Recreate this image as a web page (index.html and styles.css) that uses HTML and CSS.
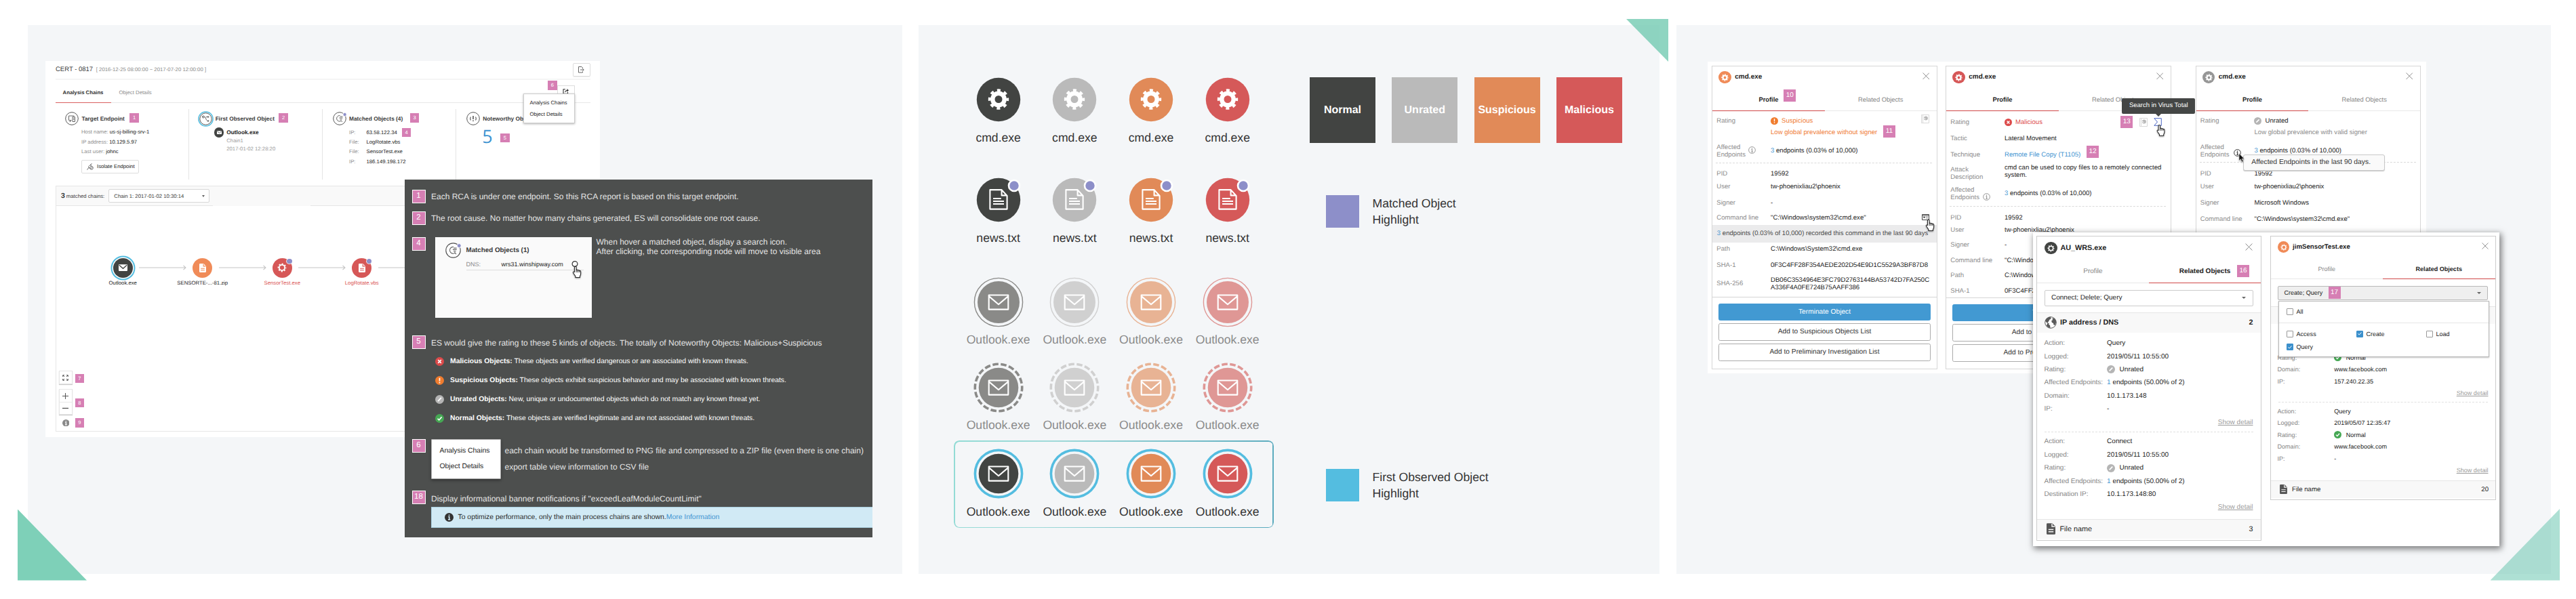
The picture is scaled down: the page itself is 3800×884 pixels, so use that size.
FILE: index.html
```html
<!DOCTYPE html>
<html lang="en">
<head>
<meta charset="utf-8">
<title>Root cause analysis – UI specification</title>
<link rel="stylesheet" href="styles.css">
</head>
<body>
<svg class="defs" aria-hidden="true">
  <symbol id="gear" viewBox="-16 -16 32 32"><circle r="8.7" fill="none" stroke="currentColor" stroke-width="6.4"/><circle r="13.2" fill="none" stroke="currentColor" stroke-width="4" stroke-dasharray="5 5.367" stroke-dashoffset="2.5"/></symbol>
  <symbol id="gear-thin" viewBox="-16 -16 32 32"><circle r="9.2" fill="none" stroke="currentColor" stroke-width="4"/><circle r="12.6" fill="none" stroke="currentColor" stroke-width="4" stroke-dasharray="5 4.896" stroke-dashoffset="2.5"/></symbol>
  <symbol id="doc" viewBox="-16 -16 32 32"><path d="M-11.6-14.9H4.6L12.6-6V13.6H-12.6V-14.9zM4.6-14.9V-6.6H12.6" fill="none" stroke="currentColor" stroke-width="2.1" stroke-linejoin="round"/><path d="M-8-2.1H3.8M-8 1.9H8M-8 5.9H8" stroke="currentColor" stroke-width="2"/></symbol>
  <symbol id="mail" viewBox="-16 -16 32 32"><path d="M-14.3-10.5H14.3V10.6H-14.3zM-14-8.6L0 3.2 14-8.6" fill="none" stroke="currentColor" stroke-width="2.1" stroke-linejoin="round"/></symbol>
  <symbol id="doc-solid" viewBox="0 0 14 18"><path d="M1.5 0H9l5 5v11.5a1.5 1.5 0 0 1-1.5 1.5h-11A1.5 1.5 0 0 1 0 16.5v-15A1.5 1.5 0 0 1 1.5 0z" fill="currentColor"/><path d="M8.6.6V5.3H13.4M3 10H11M3 13.5H11" class="cut" fill="none" stroke-width="1.5"/></symbol>
  <symbol id="mail-solid" viewBox="0 0 16 12"><rect width="16" height="12" rx="1" fill="currentColor"/><path d="M1 1.5l7 6 7-6" class="cut" fill="none" stroke-width="1.7"/></symbol>
  <symbol id="close" viewBox="0 0 10 10"><path d="M.5.5l9 9M9.5.5l-9 9" stroke="currentColor" stroke-width=".9"/></symbol>
  <symbol id="malicious" viewBox="0 0 14 14"><circle cx="7" cy="7" r="7" fill="#dc4a4a"/><path d="M4.5 4.5l5 5M9.5 4.5l-5 5" stroke="#fff" stroke-width="1.7"/></symbol>
  <symbol id="suspicious" viewBox="0 0 14 14"><circle cx="7" cy="7" r="7" fill="#f07c2e"/><path d="M7 3v5M7 9.3v1.9" stroke="#fff" stroke-width="1.8"/></symbol>
  <symbol id="unrated" viewBox="0 0 14 14"><circle cx="7" cy="7" r="7" fill="#b5b5b5"/><path d="M4.3 9.7l5.4-5.4" stroke="#fff" stroke-width="1.9"/></symbol>
  <symbol id="normal" viewBox="0 0 14 14"><circle cx="7" cy="7" r="7" fill="#46a854"/><path d="M3.8 7.2l2.3 2.4 4.2-4.9" fill="none" stroke="#fff" stroke-width="1.7"/></symbol>
  <symbol id="info" viewBox="0 0 12 12"><circle cx="6" cy="6" r="5.3" fill="#fff" stroke="currentColor" stroke-width="1"/><path d="M6 2.7v1.3M4.9 5.3H6.2V8.7M4.7 8.9h2.8" fill="none" stroke="currentColor" stroke-width="1.1"/></symbol>
  <symbol id="info-solid" viewBox="0 0 12 12"><circle cx="6" cy="6" r="6" fill="currentColor"/><path d="M6 2.3v1.6M4.9 5.3H6.2V8.8M4.6 9h3" fill="none" class="cut" stroke-width="1.4"/></symbol>
  <symbol id="hand" viewBox="0 0 22 25"><path d="M7 12V3.2a1.7 1.7 0 0 1 3.4 0V9c.3-1.3 3-1.2 3.2.4.4-1.1 2.8-.8 3 .8.5-.9 2.5-.4 2.5 1.2V16c0 2-1 3.2-1.6 4.3V23H8.9v-2.5C7.4 18.8 6.3 17 4.6 14.2c-1-1.9.7-3.4 2.4-1.6zM10.4 9v4M13.6 9.6V13M16.6 10.4V13" fill="#fff" stroke="#222" stroke-width="1.4" stroke-linejoin="round"/></symbol>
  <symbol id="book" viewBox="0 0 12 13"><path d="M.5.5h11v12H.5zM2.5.5v12" fill="#fff" stroke="#d9d9d9"/><circle cx="6.9" cy="5.6" r="3" fill="#b9b9b9"/><path d="M4 5.4l2.5 1.2" stroke="#fff"/></symbol>
  <symbol id="globe" viewBox="0 0 18 18"><circle cx="9" cy="9" r="8.3" fill="#fff" stroke="#5a5a5a" stroke-width="1"/><path d="M9 .8C5 .8 2 3.2 1 6.8l2.6 2.7 3 .3-.2 2.2 1.7 1.3.4 3.6c-1 .3-4-.8-5.8-3.4M2.4 4.6l3.7 3 1-2.5 2.5-1.5L9 .8zM11 3.2l2.5-.9c2 1.2 3.5 3.5 3.7 6.2l-1.8 4.6-1.9-.6-.5-2.5-2.2-1.1-.6-2.6 2.2-1.3z" fill="#5a5a5a"/></symbol>
  <symbol id="matched" viewBox="0 0 20 20"><circle cx="10" cy="10" r="9.3" fill="#fff" stroke="#555" stroke-width="1"/><path d="M10.5 5.5H9.8a4.3 4.3 0 1 0 2.3 8M10.5 7h4M9.5 9h5M10.5 11h3M11.8 12.3l2 2.6" fill="none" stroke="#666" stroke-width="1"/><circle cx="17.6" cy="4" r="2.6" fill="#8d8fc9" stroke="#fff" stroke-width=".8"/></symbol>
  <symbol id="expand-arrow" viewBox="0 0 70 8"><path d="M0 4H69M65.5.8L69 4l-3.5 3.2" fill="none" stroke="#c4c4c4" stroke-width="1.1"/></symbol>
</svg>

<main class="board">

<!-- ============ Overview ============ -->
<section class="panel panel-overview">
  <article class="report">
    <header class="report-head">
      <h1>CERT - 0817 <span>[ 2016-12-25 08:00:00 ~ 2017-07-20 12:00:00 ]</span></h1>
      <div class="head-btn"><svg width="9" height="10" viewBox="0 0 9 10"><path d="M6.5 3V2L5 .5H.5v8.5h6V7.5M3 5h5M6.5 3.5L8.3 5 6.5 6.5" fill="none" stroke="#555" stroke-width=".9"/></svg></div>
    </header>
    <nav class="report-tabs"><b>Analysis Chains</b><span>Object Details</span></nav>
    <div class="summary">
      <section class="sum">
        <h2><svg width="20" height="20" viewBox="0 0 20 20"><circle cx="10" cy="10" r="9.3" fill="#fff" stroke="#555"/><path d="M9.5 12.5H5.5V6h8M8 12.5v2H6.5M11 7.5h3.5v7H11z M12 9.5h1.5M12 11.5h1.5" fill="none" stroke="#666"/></svg>Target Endpoint<i class="tag tag-s gap-8">1</i></h2>
        <p><span>Host name:</span> us-sj-billing-srv-1</p>
        <p><span>IP address:</span> 10.129.5.97</p>
        <p><span>Last user:</span> johnc</p>
        <div class="isolate"><svg width="10" height="10" viewBox="0 0 10 10"><path d="M.5 9.5L3 6.5M2 5l3 3M3 4.5l2-2 2 1M5 2.5L7.5.5" fill="none" stroke="#555"/><circle cx="7" cy="6.8" r="2.3" fill="#fff" stroke="#555" stroke-width=".9"/><path d="M5.5 8.3l3-3" stroke="#555" stroke-width=".8"/></svg>Isolate Endpoint</div>
      </section>
      <section class="sum sum-first">
        <h2><svg width="23" height="23" viewBox="0 0 23 23"><circle cx="11.5" cy="11.5" r="10.6" fill="#fff" stroke="#55bee0" stroke-width="1.5"/><circle cx="11.5" cy="11.5" r="8.7" fill="none" stroke="#555"/><path d="M6 8h2.5M10 8.5c2 0 1.5 5 3.5 5.5M12 8.5h4M14.5 7L16 8.5 14.5 10M13.5 14.5H16M14.5 13l1.5 1.5L14.5 16" fill="none" stroke="#666"/><circle cx="8" cy="8.5" r="1.5" fill="none" stroke="#666"/></svg>First Observed Object<i class="tag tag-s gap-7">2</i></h2>
        <div class="first-object">
          <span class="disc disc-15 c-normal"><svg width="7" height="5.5"><use href="#mail-solid"/></svg></span>
          <div><b>Outlook.exe</b><span>Chain1</span><span>2017-01-02 12:28:20</span></div>
        </div>
      </section>
      <section class="sum">
        <h2><svg width="20" height="20"><use href="#matched"/></svg>Matched Objects (4)<i class="tag tag-s gap-10">3</i></h2>
        <dl><dt>IP:</dt><dd>63.58.122.34<i class="tag tag-s tag-ip">4</i></dd><dt>File:</dt><dd>LogRotate.vbs</dd><dt>File:</dt><dd>SensorTest.exe</dd><dt>IP:</dt><dd>186.149.198.172</dd></dl>
      </section>
      <section class="sum">
        <h2><svg width="20" height="20" viewBox="0 0 20 20"><circle cx="10" cy="10" r="9.3" fill="#fff" stroke="#555"/><path d="M10 6v5M10 12.5V14" stroke="#555" stroke-width="1.6"/><path d="M6.5 7.5C5.5 9 5.5 11 6.5 12.5M13.5 7.5c1 1.5 1 3.5 0 5" fill="none" stroke="#666" stroke-width="1.2"/></svg>Noteworthy Objects</h2>
        <div class="count">5<i class="tag tag-s">5</i></div>
      </section>
    </div>
    <div class="chains">
      <div class="chains-head"><strong>3</strong> <span>matched chains:</span>
        <div class="chain-select">Chain 1: 2017-01-02 10:30:14<i class="caret"></i></div>
      </div>
      <div class="chain-flow">
        <figure><span class="disc ringed c-normal"><svg width="13" height="10"><use href="#mail-solid"/></svg></span><figcaption>Outlook.exe</figcaption></figure>
        <svg class="link" width="70" height="8"><use href="#expand-arrow"/></svg>
        <figure><span class="disc c-orange"><svg width="10" height="13"><use href="#doc-solid"/></svg></span><figcaption>SENSORTE-...-81.zip</figcaption></figure>
        <svg class="link" width="70" height="8"><use href="#expand-arrow"/></svg>
        <figure class="bad"><span class="disc c-red"><svg width="14" height="14"><use href="#gear-thin"/></svg><i class="dot"></i></span><figcaption>SensorTest.exe</figcaption></figure>
        <svg class="link" width="70" height="8"><use href="#expand-arrow"/></svg>
        <figure class="bad"><span class="disc c-red"><svg width="10" height="13"><use href="#doc-solid"/></svg><i class="dot"></i></span><figcaption>LogRotate.vbs</figcaption></figure>
        <svg class="link" width="70" height="8"><use href="#expand-arrow"/></svg>
      </div>
      <div class="tools">
        <div class="tool"><span class="tool-btn"><svg width="9" height="9" viewBox="0 0 9 9"><path d="M.7 3V.7H3M6 .7h2.3V3M8.3 6v2.3H6M3 8.3H.7V6M1 1l2 2M8 1L6 3M8 8L6 6M1 8l2-2" fill="none" stroke="#555"/></svg></span><i class="tag tag-s">7</i></div>
        <div class="tool tool-zoom"><span class="tool-btn tool-btn-tall"><svg width="9" height="9" viewBox="0 0 9 9"><path d="M0 4.5h9M4.5 0v9" stroke="#555"/></svg><svg width="9" height="9" viewBox="0 0 9 9"><path d="M0 4.5h9" stroke="#555" stroke-width="1.3"/></svg></span><i class="tag tag-s">8</i></div>
        <div class="tool"><span class="tool-info"><svg width="10.5" height="10.5"><use href="#info-solid"/></svg></span><i class="tag tag-s">9</i></div>
      </div>
    </div>
    <div class="export">
      <i class="tag tag-s export-tag">6</i>
      <div class="export-btn"><svg width="9" height="8" viewBox="0 0 9 8"><path d="M4 .8H1v6.5h6.5V5M3.8 5C4 3 5 2.3 8 2.3M6.3.6L8.2 2.3 6.3 4" fill="none" stroke="#333" stroke-width="1.1"/></svg></div>
      <div class="export-menu"><span>Analysis Chains</span><span>Object Details</span></div>
    </div>
  </article>

  <article class="notes">
    <div class="note"><i class="tag tag-m">1</i><p>Each RCA is under one endpoint. So this RCA report is based on this target endpoint.</p></div>
    <div class="note note-2"><i class="tag tag-m">2</i><p>The root cause. No matter how many chains generated, ES will consolidate one root cause.</p></div>
    <div class="note note-4"><i class="tag tag-m">4</i>
      <div class="hover-demo">
        <svg width="23" height="23"><use href="#matched"/></svg>
        <div class="hover-body"><b>Matched Objects (1)</b>
          <div class="hover-row"><span>DNS:</span>wrs31.winshipway.com<svg class="lens" width="10" height="10" viewBox="0 0 10 10"><circle cx="5" cy="4.5" r="3.9" fill="#fff" stroke="#333" stroke-width="1.2"/></svg></div>
        </div>
        <svg class="cursor cursor-demo" width="17" height="19"><use href="#hand"/></svg>
      </div>
      <p>When hover a matched object, display a search icon.<br>After clicking, the corresponding node will move to visible area</p>
    </div>
    <div class="note note-5"><i class="tag tag-m">5</i><p>ES would give the rating to these 5 kinds of objects. The totally of Noteworthy Objects: Malicious+Suspicious</p></div>
    <ul class="ratings">
      <li><svg width="13" height="13"><use href="#malicious"/></svg><span><b>Malicious Objects:</b> These objects are verified dangerous or are associated with known threats.</span></li>
      <li><svg width="13" height="13"><use href="#suspicious"/></svg><span><b>Suspicious Objects:</b> These objects exhibit suspicious behavior and may be associated with known threats.</span></li>
      <li><svg width="13" height="13"><use href="#unrated"/></svg><span><b>Unrated Objects:</b> New, unique or undocumented objects which do not match any known threat yet.</span></li>
      <li><svg width="13" height="13"><use href="#normal"/></svg><span><b>Normal Objects:</b> These objects are verified legitimate and are not associated with known threats.</span></li>
    </ul>
    <div class="note note-6"><i class="tag tag-m">6</i>
      <div class="menu-demo"><span>Analysis Chains</span><span>Object Details</span></div>
      <p>each chain would be transformed to PNG file and compressed to a ZIP file (even there is one chain)<br>export table view information to CSV file</p>
    </div>
    <div class="note note-18"><i class="tag tag-m">18</i>
      <div class="banner-wrap"><p>Display informational banner notifications if "exceedLeafModuleCountLimit"</p>
        <div class="banner"><svg width="13" height="13"><use href="#info-solid"/></svg><span>To optimize performance, only the main process chains are shown.<a>More Information</a></span></div>
      </div>
    </div>
  </article>
  <i class="corner corner-bl"></i>
</section>

<!-- ============ Legend ============ -->
<section class="panel panel-legend">
  <div class="legend-rows">
    <div class="legend-row">
      <figure class="k-normal"><svg viewBox="-37 -37 74 74"><circle r="32.2" fill="currentColor"/><use class="glyph" href="#gear" x="-16" y="-16.5" width="32" height="32"/></svg><figcaption>cmd.exe</figcaption></figure>
      <figure class="k-unrated"><svg viewBox="-37 -37 74 74"><circle r="32.2" fill="currentColor"/><use class="glyph" href="#gear" x="-16" y="-16.5" width="32" height="32"/></svg><figcaption>cmd.exe</figcaption></figure>
      <figure class="k-suspicious"><svg viewBox="-37 -37 74 74"><circle r="32.2" fill="currentColor"/><use class="glyph" href="#gear" x="-16" y="-16.5" width="32" height="32"/></svg><figcaption>cmd.exe</figcaption></figure>
      <figure class="k-malicious"><svg viewBox="-37 -37 74 74"><circle r="32.2" fill="currentColor"/><use class="glyph" href="#gear" x="-16" y="-16.5" width="32" height="32"/></svg><figcaption>cmd.exe</figcaption></figure>
    </div>
    <div class="legend-row row-files">
      <figure class="k-normal"><svg viewBox="-37 -37 74 74"><circle r="32.2" fill="currentColor"/><use class="glyph" href="#doc" x="-16" y="-16" width="32" height="32"/><circle class="match" cx="23" cy="-21" r="8"/></svg><figcaption>news.txt</figcaption></figure>
      <figure class="k-unrated"><svg viewBox="-37 -37 74 74"><circle r="32.2" fill="currentColor"/><use class="glyph" href="#doc" x="-16" y="-16" width="32" height="32"/><circle class="match" cx="23" cy="-21" r="8"/></svg><figcaption>news.txt</figcaption></figure>
      <figure class="k-suspicious"><svg viewBox="-37 -37 74 74"><circle r="32.2" fill="currentColor"/><use class="glyph" href="#doc" x="-16" y="-16" width="32" height="32"/><circle class="match" cx="23" cy="-21" r="8"/></svg><figcaption>news.txt</figcaption></figure>
      <figure class="k-malicious"><svg viewBox="-37 -37 74 74"><circle r="32.2" fill="currentColor"/><use class="glyph" href="#doc" x="-16" y="-16" width="32" height="32"/><circle class="match" cx="23" cy="-21" r="8"/></svg><figcaption>news.txt</figcaption></figure>
    </div>
    <div class="legend-row row-faded">
      <figure class="k-normal"><svg viewBox="-37 -37 74 74"><circle r="31" fill="currentColor"/><circle class="ring-thin" r="35.6"/><use class="glyph" href="#mail" x="-16" y="-16" width="32" height="32"/></svg><figcaption>Outlook.exe</figcaption></figure>
      <figure class="k-unrated"><svg viewBox="-37 -37 74 74"><circle r="31" fill="currentColor"/><circle class="ring-thin" r="35.6"/><use class="glyph" href="#mail" x="-16" y="-16" width="32" height="32"/></svg><figcaption>Outlook.exe</figcaption></figure>
      <figure class="k-suspicious"><svg viewBox="-37 -37 74 74"><circle r="31" fill="currentColor"/><circle class="ring-thin" r="35.6"/><use class="glyph" href="#mail" x="-16" y="-16" width="32" height="32"/></svg><figcaption>Outlook.exe</figcaption></figure>
      <figure class="k-malicious"><svg viewBox="-37 -37 74 74"><circle r="31" fill="currentColor"/><circle class="ring-thin" r="35.6"/><use class="glyph" href="#mail" x="-16" y="-16" width="32" height="32"/></svg><figcaption>Outlook.exe</figcaption></figure>
    </div>
    <div class="legend-row row-faded row-dashed">
      <figure class="k-normal"><svg viewBox="-37 -37 74 74"><circle r="29.3" fill="currentColor"/><circle class="ring-dash" r="34.7"/><use class="glyph" href="#mail" x="-16" y="-16" width="32" height="32"/></svg><figcaption>Outlook.exe</figcaption></figure>
      <figure class="k-unrated"><svg viewBox="-37 -37 74 74"><circle r="29.3" fill="currentColor"/><circle class="ring-dash" r="34.7"/><use class="glyph" href="#mail" x="-16" y="-16" width="32" height="32"/></svg><figcaption>Outlook.exe</figcaption></figure>
      <figure class="k-suspicious"><svg viewBox="-37 -37 74 74"><circle r="29.3" fill="currentColor"/><circle class="ring-dash" r="34.7"/><use class="glyph" href="#mail" x="-16" y="-16" width="32" height="32"/></svg><figcaption>Outlook.exe</figcaption></figure>
      <figure class="k-malicious"><svg viewBox="-37 -37 74 74"><circle r="29.3" fill="currentColor"/><circle class="ring-dash" r="34.7"/><use class="glyph" href="#mail" x="-16" y="-16" width="32" height="32"/></svg><figcaption>Outlook.exe</figcaption></figure>
    </div>
    <div class="legend-row row-first">
      <figure class="k-normal"><svg viewBox="-37 -37 74 74"><circle r="29.3" fill="currentColor"/><circle class="ring-blue" r="34.6"/><use class="glyph" href="#mail" x="-16" y="-16" width="32" height="32"/></svg><figcaption>Outlook.exe</figcaption></figure>
      <figure class="k-unrated"><svg viewBox="-37 -37 74 74"><circle r="29.3" fill="currentColor"/><circle class="ring-blue" r="34.6"/><use class="glyph" href="#mail" x="-16" y="-16" width="32" height="32"/></svg><figcaption>Outlook.exe</figcaption></figure>
      <figure class="k-suspicious"><svg viewBox="-37 -37 74 74"><circle r="29.3" fill="currentColor"/><circle class="ring-blue" r="34.6"/><use class="glyph" href="#mail" x="-16" y="-16" width="32" height="32"/></svg><figcaption>Outlook.exe</figcaption></figure>
      <figure class="k-malicious"><svg viewBox="-37 -37 74 74"><circle r="29.3" fill="currentColor"/><circle class="ring-blue" r="34.6"/><use class="glyph" href="#mail" x="-16" y="-16" width="32" height="32"/></svg><figcaption>Outlook.exe</figcaption></figure>
    </div>
  </div>
  <div class="legend-keys">
    <div class="swatches"><b class="s-normal">Normal</b><b class="s-unrated">Unrated</b><b class="s-suspicious">Suspicious</b><b class="s-malicious">Malicious</b></div>
    <div class="key"><i class="key-match"></i><span>Matched Object<br>Highlight</span></div>
    <div class="key key-2"><i class="key-first"></i><span>First Observed Object<br>Highlight</span></div>
  </div>
  <i class="corner corner-tr"></i>
</section>

<!-- ============ Object details ============ -->
<section class="panel panel-details">
  <div class="sheet">
    <article class="card card-a">
      <header><span class="disc disc-18 c-orange"><svg width="11" height="11"><use href="#gear"/></svg></span><b>cmd.exe</b><svg class="x" width="10.5" height="10.5"><use href="#close"/></svg></header>
      <nav class="tabs"><b>Profile</b><span>Related Objects</span><i class="tag tag-l tag-10">10</i></nav>
      <div class="props">
        <span>Rating</span><em class="rate orange"><svg width="11" height="11"><use href="#suspicious"/></svg>Suspicious<svg class="book" width="12" height="13"><use href="#book"/></svg></em>
        <span></span><em class="orange">Low global prevalence without signer<i class="tag tag-l tag-11">11</i></em>
        <span>Affected<br>Endpoints<svg class="info" width="11" height="11"><use href="#info"/></svg></span><em class="drop"><a>3</a> endpoints (0.03% of 10,000)</em>
        <hr>
        <span>PID</span><em>19592</em>
        <span>User</span><em>tw-phoenixliau2\phoenix</em>
        <span>Signer</span><em>-</em>
        <span>Command line</span><em>"C:\Windows\system32\cmd.exe"<svg class="cmd-icon" width="11" height="9" viewBox="0 0 11 9"><path d="M.5.5h10v8H.5zM.5 2h10" fill="#fff" stroke="#444"/><path d="M2 4h3L3.5 6zM6 4h3M6 6h3" fill="#444" stroke="#444" stroke-width=".6"/></svg></em>
        <div class="hl"><a>3</a> endpoints (0.03% of 10,000) recorded this command in the last 90 days</div>
        <span>Path</span><em>C:\Windows\System32\cmd.exe</em>
        <span>SHA-1</span><em>0F3C4FF28F354AEDE202D54E9D1C5529A3BF87D8</em>
        <span class="drop">SHA-256</span><em>DB06C3534964E3FC79D2763144BA53742D7FA250C<br>A336F4A0FE724B75AAFF386</em>
      </div>
      <footer><div class="btn primary">Terminate Object</div><div class="btn">Add to Suspicious Objects List</div><div class="btn">Add to Preliminary Investigation List</div></footer>
      <svg class="cursor cursor-cmd" width="17" height="19"><use href="#hand"/></svg>
    </article>

    <article class="card card-b">
      <header><span class="disc disc-18 c-red"><svg width="11" height="11"><use href="#gear"/></svg></span><b>cmd.exe</b><svg class="x" width="10.5" height="10.5"><use href="#close"/></svg></header>
      <nav class="tabs"><b>Profile</b><span>Related Objects</span></nav>
      <div class="props">
        <span>Rating</span><em class="rate red"><svg width="11" height="11"><use href="#malicious"/></svg>Malicious<i class="tag tag-l tag-13">13</i><svg width="12" height="13"><use href="#book"/></svg><svg class="vt" width="12" height="12" viewBox="0 0 12 12"><path d="M.8.7H11.3V11.3H.8L5.5 6z" fill="#fff" stroke="#4a66c4"/></svg></em>
        <span>Tactic</span><em>Lateral Movement</em>
        <span>Technique</span><em><a>Remote File Copy (T1105)</a><i class="tag tag-l tag-12">12</i></em>
        <span class="drop-3">Attack<br>Description</span><em>cmd can be used to copy files to a remotely connected<br>system.</em>
        <span>Affected<br>Endpoints<svg class="info info-low" width="11" height="11"><use href="#info"/></svg></span><em class="drop"><a>3</a> endpoints (0.03% of 10,000)</em>
        <hr>
        <span>PID</span><em>19592</em>
        <span>User</span><em>tw-phoenixliau2\phoenix</em>
        <span>Signer</span><em>-</em>
        <span>Command line</span><em>"C:\Windows\system32\cmd.exe"</em>
        <span>Path</span><em>C:\Windows\System32\cmd.exe</em>
        <span>SHA-1</span><em>0F3C4FF28F354AEDE202D54E9D1C5529A3BF87D8</em>
      </div>
      <footer><div class="btn primary">Terminate Object</div><div class="btn">Add to Suspicious Objects List</div><div class="btn">Add to Preliminary Investigation List</div></footer>
      <div class="tip-dark">Search in Virus Total</div>
      <svg class="cursor cursor-vt" width="16" height="19"><use href="#hand"/></svg>
    </article>

    <article class="card card-c">
      <header><span class="disc disc-18 c-gray"><svg width="11" height="11"><use href="#gear"/></svg></span><b>cmd.exe</b><svg class="x" width="10.5" height="10.5"><use href="#close"/></svg></header>
      <nav class="tabs"><b>Profile</b><span>Related Objects</span></nav>
      <div class="props">
        <span>Rating</span><em class="rate"><svg width="11" height="11"><use href="#unrated"/></svg>Unrated</em>
        <span></span><em class="muted">Low global prevalence with valid signer</em>
        <span>Affected<br>Endpoints<svg class="info info-dark" width="11" height="11"><use href="#info"/></svg></span><em class="drop"><a>3</a> endpoints (0.03% of 10,000)</em>
        <hr>
        <span>PID</span><em>19592</em>
        <span>User</span><em>tw-phoenixliau2\phoenix</em>
        <span>Signer</span><em>Microsoft Windows</em>
        <span>Command line</span><em>"C:\Windows\system32\cmd.exe"</em>
      </div>
      <div class="tip-light">Affected Endpoints in the last 90 days.</div>
      <svg class="cursor cursor-arrow" width="9" height="14" viewBox="0 0 9 14"><path d="M1 .5V11l2.4-2.2L5.2 13l1.9-.8L5.3 8.2h3.2z" fill="#111" stroke="#fff" stroke-width=".5"/></svg>
    </article>
  </div>

  <div class="related">
    <article class="rel rel-d">
      <header><span class="disc disc-18 c-normal"><svg width="11" height="11"><use href="#gear-thin"/></svg></span><b>AU_WRS.exe</b><svg class="x" width="11" height="11"><use href="#close"/></svg></header>
      <nav class="tabs"><span>Profile</span><b>Related Objects</b><i class="tag tag-l tag-16">16</i></nav>
      <div class="select">Connect; Delete; Query<i class="caret"></i></div>
      <div class="group"><svg width="18" height="18"><use href="#globe"/></svg><b>IP address / DNS</b><b>2</b></div>
      <div class="entry"><span>Action:</span><em>Query</em><span>Logged:</span><em>2019/05/11 10:55:00</em><span>Rating:</span><em class="rate"><svg width="12" height="12"><use href="#unrated"/></svg>Unrated</em><span>Affected Endpoints:</span><em><a>1</a> endpoints (50.00% of 2)</em><span>Domain:</span><em>10.1.173.148</em><span>IP:</span><em>-</em><u>Show detail</u></div>
      <hr>
      <div class="entry"><span>Action:</span><em>Connect</em><span>Logged:</span><em>2019/05/11 10:55:00</em><span>Rating:</span><em class="rate"><svg width="12" height="12"><use href="#unrated"/></svg>Unrated</em><span>Affected Endpoints:</span><em><a>1</a> endpoints (50.00% of 2)</em><span>Destination IP:</span><em>10.1.173.148:80</em><u>Show detail</u></div>
      <div class="group group-file"><svg width="13" height="17"><use href="#doc-solid"/></svg><span>File name</span><span>3</span></div>
    </article>
    <article class="rel rel-e">
      <header><span class="disc disc-17 c-orange"><svg width="10" height="10"><use href="#gear-thin"/></svg></span><b>jimSensorTest.exe</b><svg class="x" width="10" height="10"><use href="#close"/></svg></header>
      <nav class="tabs"><span>Profile</span><b>Related Objects</b></nav>
      <div class="select select-open">Create; Query<i class="tag tag-l tag-17">17</i><i class="caret"></i>
        <div class="options">
          <div class="opt-all"><label><i class="box"></i>All</label></div>
          <div class="opt-grid"><label><i class="box"></i>Access</label><label><i class="box on"><svg width="6" height="5" viewBox="0 0 6 5"><path d="M.5 2.3l1.7 1.8L5.5.5" fill="none" stroke="#fff"/></svg></i>Create</label><label><i class="box"></i>Load</label><label><i class="box on"><svg width="6" height="5" viewBox="0 0 6 5"><path d="M.5 2.3l1.7 1.8L5.5.5" fill="none" stroke="#fff"/></svg></i>Query</label></div>
        </div>
      </div>
      <div class="group"></div>
      <div class="entry entry-under"><span>Rating:</span><em class="rate"><svg width="11" height="11"><use href="#normal"/></svg>Normal</em><span>Domain:</span><em>www.facebook.com</em><span>IP:</span><em>157.240.22.35</em><u>Show detail</u></div>
      <hr>
      <div class="entry"><span>Action:</span><em>Query</em><span>Logged:</span><em>2019/05/07 12:35:47</em><span>Rating:</span><em class="rate"><svg width="11" height="11"><use href="#normal"/></svg>Normal</em><span>Domain:</span><em>www.facebook.com</em><span>IP:</span><em>-</em><u>Show detail</u></div>
      <div class="group group-file"><svg width="11" height="14"><use href="#doc-solid"/></svg><span>File name</span><span>20</span></div>
    </article>
  </div>
  <i class="corner corner-br"></i>
</section>
</main>
</body>
</html>
```

FILE: styles.css
```css
*, *::before, *::after { box-sizing: border-box; }
body { margin: 0; background: #fff; font-family: "Liberation Sans", Arial, sans-serif; color: #222; text-rendering: geometricPrecision; }
h1, h2, p, ul, dl, dd, figure { margin: 0; padding: 0; }
ul { list-style: none; }
em, i { font-style: normal; }
svg { display: block; flex: none; }
.defs { position: absolute; width: 0; height: 0; }
a { color: #3f94d1; }

/* ---------- board ---------- */
.board { display: flex; width: 3800px; height: 884px; padding: 37px 0 0 41px; }
.panel { position: relative; flex: none; height: 809.5px; background: #f4f6f8; }
.panel-overview { width: 1290px; }
.panel-legend { width: 1093px; margin-left: 24px; }
.panel-details { width: 1290px; margin-left: 25px; }
.corner { position: absolute; }
.corner-bl { left: -15px; bottom: -10px; width: 102px; height: 105px; background: rgba(119,205,180,.95); clip-path: polygon(0 0, 0 100%, 100% 100%); }
.corner-tr { right: -13px; top: -9px; width: 62px; height: 63px; background: rgba(115,202,177,.8); clip-path: polygon(0 0, 100% 0, 100% 100%); }
.corner-br { right: -13px; bottom: -10px; width: 102.5px; height: 105.5px; background: rgba(120,203,183,.6); clip-path: polygon(100% 0, 100% 100%, 0 100%); }

/* ---------- number tags ---------- */
.tag { display: inline-flex; flex: none; align-items: center; justify-content: center; background: #d67fb4; color: #fff; font-weight: 400; line-height: 1; }
.tag-s { width: 13.5px; height: 13.5px; font-size: 7.5px; }
.tag-m { width: 20px; height: 20px; border: 1px solid #fff; font-size: 11.5px; }
.tag-l { width: 18px; height: 18px; font-size: 10px; }

/* ---------- discs ---------- */
.disc { position: relative; display: flex; flex: none; align-items: center; justify-content: center; width: 29px; height: 29px; border-radius: 50%; color: #fff; }
.disc-15 { width: 14.5px; height: 14.5px; }
.disc-17 { width: 17px; height: 17px; }
.disc-18 { width: 18.5px; height: 18.5px; }
.c-normal { --cut: #424442; background: #424442; }
.c-orange { --cut: #f08b58; background: #f08b58; }
.c-red { --cut: #d65757; background: #d65757; }
.c-gray { background: #969696; }
.cut { stroke: var(--cut, #fff); }
.ringed { box-shadow: 0 0 0 1.5px #fff, 0 0 0 3.5px #54bde0; }
.dot { position: absolute; right: 0; top: 1px; width: 7.5px; height: 7.5px; border-radius: 50%; background: #8d8fc9; box-shadow: 0 0 0 .8px #fff; }
.caret { border: 2.5px solid transparent; border-top: 3px solid #666; border-bottom: 0; }

/* ---------- report ---------- */
.report { position: absolute; left: 26px; top: 53px; width: 818px; height: 554.5px; padding: 0 14.5px 8px; background: #fff; font-size: 7.75px; }
.report-head { display: flex; align-items: flex-start; justify-content: space-between; height: 28px; border-bottom: 2px solid #f5f5f5; }
.report-head h1 { padding-left: .5px; font-size: 9.5px; font-weight: 400; line-height: 26px; color: #3c3c3c; white-space: pre; }
.report-head h1 span { margin-left: 2px; font-size: 7.8px; color: #8c8c8c; }
.head-btn { display: flex; align-items: center; justify-content: center; width: 25.5px; height: 19.5px; margin-top: 3px; border: 1px solid #ddd; border-radius: 2px; box-shadow: 0 1px 1px #eee; }
.report-tabs { display: flex; height: 34px; border-bottom: 1px solid #e8e8e8; line-height: 38px; }
.report-tabs b { height: 34px; width: 82px; text-align: center; color: #333; border-bottom: 1.5px solid #d9605f; }
.report-tabs span { margin-left: 12px; color: #8c8c8c; }
.summary { display: flex; height: 104px; margin-top: 9px; }
.sum { width: 197.6px; padding: 4px 0 0 14.5px; border-right: 1px solid #e4e4e4; white-space: nowrap; }
.sum:last-child { border-right: 0; }
.sum h2 { display: flex; align-items: center; gap: 4.5px; height: 20px; font-size: 8.35px; color: #3c3c3c; }
.sum h2 .tag { position: relative; top: -1px; }
.sum h2 .gap-8 { margin-left: 3px; }
.sum h2 .gap-7 { margin-left: 3.5px; }
.sum h2 .gap-10 { margin-left: 6px; }
.sum p { margin-left: 24px; line-height: 14.7px; }
.sum h2 + p { margin-top: 3px; }
.sum p span, .sum dt { color: #8c8c8c; }
.isolate { display: flex; align-items: center; gap: 5px; width: 85.5px; height: 23px; margin: 4px 0 0 23.5px; padding-left: 7.5px; border: 1px solid #ddd; border-radius: 2px; height: 19.5px; }
.sum-first { padding-left: 13px; }
.sum-first h2 { gap: 3px; }
.first-object { display: flex; gap: 4px; margin: 3px 0 0 24px; }
.first-object div { display: flex; flex-direction: column; line-height: 12.3px; color: #9c9c9c; }
.first-object b { font-size: 8.3px; line-height: 14px; color: #222; }
.sum dl { display: grid; grid-template-columns: 25.5px 1fr; margin: 3.5px 0 0 24.5px; line-height: 14.4px; }
.sum dd { display: flex; height: 14.4px; align-items: center; }
.tag-ip { margin-left: 7px; }
.count { display: flex; align-items: center; gap: 11.5px; margin: 3px 0 0 23.5px; height: 26px; font-family: "Open Sans", sans-serif; font-size: 27px; line-height: 26px; color: #3f94d1; }
.count .tag { margin-top: 5px; font-family: "Liberation Sans", Arial, sans-serif; }
.chains { position: relative; display: flex; flex-direction: column; height: 363px; margin-top: 8.5px; border: 1px solid #e6e6e6; }
.chains-head { display: flex; align-items: center; height: 29px; padding-left: 7.5px; background: linear-gradient(90deg, #e6e6e6 231px, #f9f9f9 231px, #f9f9f9 375px, #e6e6e6 375px) bottom / 100% 1px no-repeat #f9f9f9; }
.chains-head strong { margin-right: 2px; font-size: 10.5px; color: #333; }
.chains-head span { width: 62.5px; color: #3c3c3c; }
.chain-select { display: flex; align-items: center; justify-content: space-between; width: 148.5px; height: 19.5px; padding: 0 6px 0 7px; background: #fff; border: 1px solid #d8d8d8; border-radius: 2px; color: #3c3c3c; }
.chain-flow { display: flex; padding: 77px 0 0 75px; }
.chain-flow figure { display: flex; flex-direction: column; align-items: center; width: 47.5px; }
.chain-flow figcaption { margin-top: 3px; line-height: 10px; white-space: nowrap; }
.chain-flow .bad figcaption { color: #d94f4f; }
.chain-flow .link { margin-top: 10.5px; }
.tools { display: flex; flex-direction: column; margin: auto 0 5px 4px; gap: 7px; }
.tool { display: flex; align-items: center; gap: 3.5px; }
.tool .tag { margin-top: 3px; }
.tool:last-child { margin-top: -2px; }
.tool:last-child .tag { margin-top: 0; }
.tool-btn { display: flex; flex-direction: column; align-items: center; justify-content: space-around; width: 20.5px; height: 20px; background: #fff; border: 1px solid #e6e6e6; box-shadow: 0 1px 1px #ccc; }
.tool-btn-tall { height: 38px; background: linear-gradient(#e8e8e8, #e8e8e8) center / 100% 1px no-repeat #fff; }
.tool-info { display: flex; justify-content: center; width: 20.5px; color: #8a8a8a; }
.export { position: absolute; right: 37px; top: 29px; width: 76px; }
.export-tag { position: absolute; right: 26.5px; top: 0; }
.export-btn { display: flex; align-items: center; justify-content: center; width: 26.5px; height: 14px; margin: 7px 0 0 auto; padding-top: 3px; background: #fff; border: 1px solid #ddd; }
.export-menu { position: relative; top: -2px; display: flex; flex-direction: column; height: 44px; padding: 3.5px 0 0 8.5px; background: #fff; border: 1px solid #ccc; box-shadow: 0 1px 3px rgba(0,0,0,.3); line-height: 17.3px; }

/* ---------- notes ---------- */
.notes { position: absolute; left: 555.5px; top: 228px; width: 690px; height: 528px; padding: 15px 0 0 11px; background: #4d4f4e; color: #e4e4e4; font-size: 12px; }
.note { display: flex; align-items: flex-start; white-space: nowrap; }
.note > p { margin-left: 8.5px; line-height: 20px; }
.note-2 { margin-top: 12px; }
.note-4 { height: 119px; margin-top: 18px; }
.note-4 > p { margin-left: 7px; line-height: 14px; }
.hover-demo { position: relative; display: flex; gap: 8px; width: 230.5px; height: 119px; margin-left: 14.5px; padding: 8px 0 0 14.5px; background: #fafafa; color: #222; }
.hover-body { font-size: 9px; }
.hover-body b { display: block; height: 29px; font-size: 9.8px; line-height: 23px; color: #3a3a3a; }
.hover-row { display: flex; width: 173px; height: 12px; align-items: flex-start; line-height: 7px; border-bottom: 1px solid #ddd; }
.hover-row span { width: 52px; color: #8c8c8c; }
.hover-row .lens { margin: -2px 0 0 12px; }
.cursor { position: absolute; filter: drop-shadow(0 1px 1px rgba(0,0,0,.4)); }
.cursor-demo { left: 200px; top: 42px; }
.note-5 { margin-top: 25.5px; }
.note-5 p { padding-top: 1px; }
.ratings { margin: 4px 0 0 34.5px; font-size: 10.4px; color: #fff; white-space: nowrap; }
.ratings li { display: flex; align-items: center; gap: 9px; height: 28px; }
.note-6 { margin-top: 16.5px; height: 59px; }
.menu-demo { display: flex; flex-direction: column; width: 103px; height: 58.5px; margin-left: 8px; padding: 6px 0 0 12px; background: #fff; border: 1px solid #aaa; border-radius: 1px; box-shadow: 0 2px 4px rgba(0,0,0,.35); color: #222; font-size: 10.4px; line-height: 22.5px; }
.note-6 > p { margin: 5px 0 0 6px; line-height: 24px; }
.note-18 { margin-top: 17px; }
.banner-wrap { flex: 1; margin-left: 8px; }
.banner-wrap p { height: 24px; padding: 0 .5px; line-height: 24px; }
.banner { display: flex; align-items: center; gap: 7px; height: 31px; padding-left: 19px; background: #d1eaf5; border: solid #a9cfe0; border-width: 1px 0 1px 1px; color: #2b2b2b; font-size: 10.4px; }
.banner svg { color: #333; --cut: #d1eaf5; }

/* ---------- legend ---------- */
.panel-legend { display: flex; padding: 73px 0 0 51.5px; }
.legend-rows { width: 472px; font-size: 17.6px; color: #333; }
.legend-row { display: flex; padding-left: 9.8px; }
.legend-row figure { width: 112.7px; }
.legend-row figure svg { width: 74px; height: 74px; margin: 0 auto; }
.legend-row figcaption { margin: 9px -10px 0; line-height: 20px; text-align: center; color: #333; }
.row-files { margin-top: 45px; }
.row-faded { margin-top: 48px; }
.row-dashed { margin-top: 24px; }
.row-faded figcaption { color: #8a8a8a; margin-top: 8px; }
.row-first { position: relative; height: 129px; margin-top: 13px; padding-top: 12px; }
.row-first::before { content: ""; position: absolute; inset: 0; padding: 1.5px; border-radius: 8px; background: linear-gradient(100deg, #92dbd5, #9ed9d8 30%, #58a9bd); mask: linear-gradient(#000 0 0) content-box exclude, linear-gradient(#000 0 0); }
.k-normal { color: #424442; }
.k-unrated { color: #bababa; }
.k-suspicious { color: #e18a58; }
.k-malicious { color: #d55959; }
.row-faded .k-normal { color: #8a8a88; }
.row-faded .k-unrated { color: #d0d0d0; }
.row-faded .k-suspicious { color: #e8b394; }
.row-faded .k-malicious { color: #df9795; }
.glyph { color: #fff; }
.match { fill: #8d8fc9; stroke: #fff; stroke-width: 2.6; }
.ring-thin { fill: none; stroke: currentColor; stroke-width: 1.4; }
.ring-dash { fill: none; stroke: currentColor; stroke-width: 3.6; stroke-dasharray: 8.6 3.512; stroke-dashoffset: 3; }
.ring-blue { fill: none; stroke: #54bde0; stroke-width: 3.6; }
.legend-keys { margin: 4px 0 0 53.5px; }
.swatches { display: flex; gap: 24.3px; }
.swatches b { display: flex; align-items: center; justify-content: center; width: 97px; height: 97px; color: #fff; font-size: 16px; }
.s-normal { background: #424442; }
.s-unrated { background: #bababa; }
.s-suspicious { background: #e18a58; }
.s-malicious { background: #d55959; }
.key { display: flex; gap: 20px; height: 48px; margin: 77px 0 0 24px; font-size: 17.6px; line-height: 24px; color: #333; }
.key i { width: 48.5px; height: 48px; }
.key-2 { margin-top: 355.5px; }
.key-match { background: #8d8fc9; }
.key-first { background: #54bde0; }

/* ---------- profile cards ---------- */
.sheet { position: absolute; left: 46px; top: 54px; display: flex; width: 1060px; height: 460px; padding: 6px 0 0 6.3px; background: #fff; }
.card { position: relative; display: flex; flex: none; flex-direction: column; width: 332.5px; height: 448px; border: 1px solid #d6d6d6; background: #fff; font-size: 9.6px; }
.card-b { margin-left: 12.5px; }
.card-c { margin-left: 36px; }
.card header, .rel header { display: flex; align-items: center; }
.card header { height: 32px; padding: 0 10.5px 0 9px; font-size: 10px; }
.card header b { margin: -1px 0 0 5.5px; }
.x { margin: -3px 0 0 auto; color: #888; }
.tabs { position: relative; display: flex; text-align: center; }
.tabs > b, .tabs > span { flex: 1; }
.tabs > span { color: #858585; border-bottom: 1.5px solid #e8e8e8; }
.tabs > b { border-bottom: 1.5px solid #d04848; }
.card .tabs { height: 33.5px; line-height: 35px; font-size: 9.33px; }
.tag-10 { position: absolute; left: 105px; top: 2px; }
.props { display: grid; grid-template-columns: 79.7px 1fr; align-items: start; padding: 9px 0 0 6px; line-height: 11px; white-space: nowrap; }
.props > span { position: relative; color: #8c8c8c; }
.props > em { position: relative; color: #1c1c1c; }
.props .drop { padding-top: 5px; }
.props .drop-3 { padding-top: 3px; }
.props hr { grid-column: 1 / -1; width: 319px; margin: 0 0 0 -1px; border: 0; border-top: 1px dashed #dadada; }
.card-a .props { grid-template-rows: 17px 22px 28.5px 11.2px 19.3px 24px 22px 15.5px 30.2px 24px 22px; }
.card-b .props { padding-top: 11px; grid-template-rows: 24px 24px 19px 33px 29.5px 12.2px 18.3px 22px 22.7px 22px 23px; }
.card-c .props { grid-template-rows: 17px 22px 27px 12.7px 19.3px 24px 24px; }
.props .rate { display: flex; align-items: center; gap: 5px; }
.props .orange { color: #ef7c36; }
.props .red { color: #dc4a4a; }
.props .muted { color: #8c8c8c; }
.book { margin: -10px 11px -4px auto; }
.info { position: absolute; left: 46.5px; top: 4.5px; color: #8c8c8c; }
.info-low { left: 48px; top: 10px; }
.info-dark { left: 49px; top: 8px; color: #222; }
.tag-11 { position: absolute; left: 166px; top: -4.5px; }
.tag-12 { position: absolute; left: 121px; top: -7.5px; }
.props .tag-13 { margin: -4px 5px -4px auto; }
.card-b .rate svg { margin-top: -2px; margin-bottom: -2px; }
.card-b .rate .vt { margin-left: 4px; margin-right: 12.5px; }
.cmd-icon { position: absolute; right: 10.5px; top: 0; }
.hl { grid-column: 1 / -1; height: 26px; margin-left: -6px; padding-left: 6.5px; line-height: 26px; background: #ebebec; color: #4a4a4a; }
.card footer { display: flex; flex-direction: column; gap: 4.7px; height: 106.5px; margin-top: auto; padding: 9px 9px 0; border-top: 1px solid #d6d6d6; }
.card-b footer { height: 105.5px; }
.btn { height: 25.3px; border: 1px solid #ababab; border-radius: 2.5px; line-height: 23.5px; text-align: center; font-size: 10.2px; color: #333; }
.btn.primary { border-color: #4299d2; background: #4299d2; color: #fff; }
.cursor-cmd { left: 312px; top: 225px; }
.cursor-vt { left: 308px; top: 85px; }
.cursor-arrow { left: 62.5px; top: 128px; }
.tip-dark { position: absolute; left: 259px; top: 47px; width: 108px; height: 23px; border-radius: 2px; background: #444645; color: #fff; font-size: 9.5px; line-height: 22px; text-align: center; }
.tip-dark::after { content: ""; position: absolute; left: 50px; top: 23px; border: 4px solid transparent; border-top-color: #444645; border-bottom: 0; }
.tip-light { position: absolute; left: 69px; top: 130px; width: 209.5px; height: 24px; padding-left: 11.5px; border: 1px solid #c8c8c8; border-radius: 3px; background: #fafafa; color: #333; font-size: 10.35px; line-height: 21px; box-shadow: 0 1px 1px #ccc; }

/* ---------- related-objects window ---------- */
.related { position: absolute; left: 526px; top: 305.5px; display: flex; align-items: flex-start; width: 687.5px; height: 463.5px; padding: 5px 0 0 5px; background: #fff; box-shadow: 2px 3px 9px 1px rgba(0,0,0,.5); }
.rel { flex: none; border: 1.5px solid #ccc; background: #fff; white-space: nowrap; }
.rel-d { width: 332px; height: 450px; font-size: 10px; }
.rel-e { width: 333px; height: 390px; margin-left: 12.5px; font-size: 9.05px; }
.rel header { padding: 0 12.5px 0 11px; }
.rel header b { margin-left: 5px; }
.rel-d header { height: 35px; font-size: 10.8px; }
.rel-e header { height: 32px; padding: 0 10px 0 10.5px; font-size: 9.7px; }
.rel-d .tabs { height: 34px; line-height: 34px; }
.rel-e .tabs { height: 31px; line-height: 32px; }
.tag-16 { position: absolute; left: 295px; top: 7px; }
.select { display: flex; align-items: center; justify-content: space-between; height: 24.5px; margin: 10px 11px 9px; padding: 0 10px 0 9px; border: 1px solid #ccc; border-radius: 2px; }
.select .caret { border-width: 3px 3px 0; }
.group { display: flex; align-items: center; height: 29.5px; padding: 0 11.5px 0 11px; border-top: 1.5px solid #e6e6e6; background: #f8f8f8; font-size: 10.8px; }
.group > :nth-child(2) { margin-left: 5px; }
.group > :last-child { margin-left: auto; }
.group svg { color: #555; --cut: #f8f8f8; }
.entry { display: grid; grid-template-columns: 92.6px 1fr; grid-auto-rows: 19.4px; align-items: center; margin: 6.5px 11.5px 0 10.5px; }
.entry span { color: #858585; }
.entry u { grid-column: 1 / -1; justify-self: end; color: #9c9c9c; }
.entry .rate { display: flex; align-items: center; gap: 6.5px; }
.rel hr { margin: 4px 11px 0; border: 0; border-top: 1px dashed #e0e0e0; }
.rel-d hr + .entry { margin-top: 4.5px; }
.group-file { margin-top: 7px; }
.group-file svg { margin: 0 1.5px 0 3px; }
.rel-e .select { position: relative; height: 21.5px; margin: 10px 10.5px 9px; padding: 0 9px 0 8.5px; background: #efefef; border-color: #b8b8b8; }
.tag-17 { position: absolute; left: 73.5px; top: 0; }
.options { position: absolute; z-index: 1; left: -.5px; top: 21px; width: 311px; height: 83px; border: 1px solid #b8b8b8; background: #fff; box-shadow: 0 1px 2px rgba(0,0,0,.25); }
.options label { display: flex; align-items: center; gap: 5px; }
.opt-all { display: flex; height: 32px; padding-left: 11px; border-bottom: 1px solid #e6e6e6; }
.opt-grid { display: grid; grid-template-columns: repeat(3, 103px); grid-auto-rows: 19.5px; padding: 6.5px 0 0 11px; }
.box { display: flex; align-items: center; justify-content: center; width: 10px; height: 10px; border: 1px solid #999; border-radius: 1px; background: #fff; }
.box.on { background: #3c90cc; border-color: #3c90cc; }
.rel-e .group { height: 25.5px; padding: 0 9.5px; font-size: 9.65px; }
.rel-e .entry { grid-template-columns: 83.7px 1fr; grid-auto-rows: 17.5px; margin: 4px 10px 0; }
.rel-e .entry-under { margin-top: 41.5px; }
.rel-e .group-file { margin-top: 6px; }
.rel-e .group-file svg { margin: 0 2px 0 4px; }
```
